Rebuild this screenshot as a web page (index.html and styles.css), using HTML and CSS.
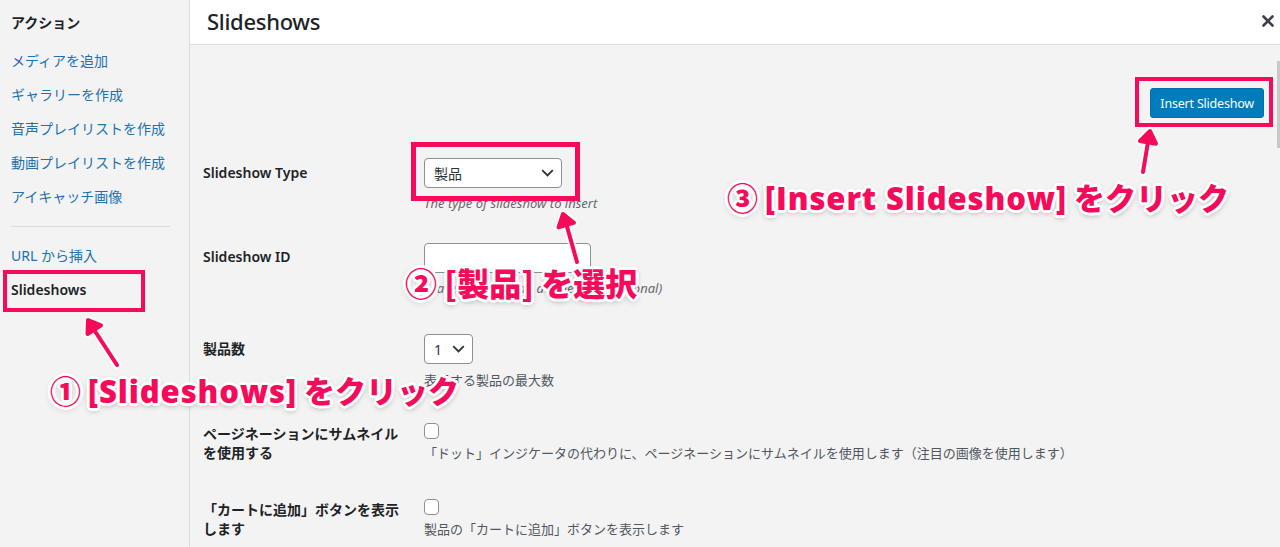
FILE: index.html
```html
<!DOCTYPE html>
<html lang="ja">
<head>
<meta charset="utf-8">
<title>Slideshows</title>
<link rel="stylesheet" href="styles.css">
</head>
<body>
<div class="modal">
  <aside class="sidebar">
    <div class="menu-heading">アクション</div>
    <a class="menu-item">メディアを追加</a>
    <a class="menu-item">ギャラリーを作成</a>
    <a class="menu-item">音声プレイリストを作成</a>
    <a class="menu-item">動画プレイリストを作成</a>
    <a class="menu-item">アイキャッチ画像</a>
    <div class="menu-sep"></div>
    <a class="menu-item">URL から挿入</a>
    <a class="menu-item active">Slideshows</a>
  </aside>

  <main class="frame">
    <header class="frame-title">
      <h1>Slideshows</h1>
      <span class="close">
        <svg width="12" height="12" viewBox="0 0 12 12"><path d="M1.5 1.5L10.5 10.5M10.5 1.5L1.5 10.5" stroke="#3c434a" stroke-width="2.6" stroke-linecap="round" fill="none"/></svg>
      </span>
    </header>
    <div class="content">
      <div class="actions">
        <span class="btn-primary">Insert Slideshow</span>
      </div>
      <div class="form">
        <div class="row">
          <div class="row-label">Slideshow Type</div>
          <div class="row-field">
            <div class="select select-wide"><span>製品</span>
              <svg width="13" height="8" viewBox="0 0 13 8"><path d="M1.2 1.2L6.5 6.4L11.8 1.2" stroke="#2c3338" stroke-width="1.8" fill="none"/></svg>
            </div>
            <p class="desc desc-italic">The type of slideshow to insert</p>
          </div>
        </div>
        <div class="row row-id">
          <div class="row-label">Slideshow ID</div>
          <div class="row-field">
            <div class="text-input"></div>
            <p class="desc desc-italic">Leave blank to add a slideshow (optional)</p>
          </div>
        </div>
        <div class="row row-count">
          <div class="row-label">製品数</div>
          <div class="row-field">
            <div class="select select-small"><span>1</span>
              <svg width="13" height="8" viewBox="0 0 13 8"><path d="M1.2 1.2L6.5 6.4L11.8 1.2" stroke="#2c3338" stroke-width="1.8" fill="none"/></svg>
            </div>
            <p class="desc">表示する製品の最大数</p>
          </div>
        </div>
        <div class="row row-check">
          <div class="row-label">ページネーションにサムネイルを使用する</div>
          <div class="row-field">
            <span class="checkbox"></span>
            <p class="desc">「ドット」インジケータの代わりに、ページネーションにサムネイルを使用します（注目の画像を使用します）</p>
          </div>
        </div>
        <div class="row row-check">
          <div class="row-label">「カートに追加」ボタンを表示します</div>
          <div class="row-field">
            <span class="checkbox"></span>
            <p class="desc">製品の「カートに追加」ボタンを表示します</p>
          </div>
        </div>
      </div>
      <div class="scrollbar"></div>
    </div>
  </main>

  <div class="annotations">
    <svg class="marks" width="1280" height="547" viewBox="0 0 1280 547">
      <g fill="none" stroke="#f70a5a" stroke-width="4">
        <rect x="5" y="272" width="138" height="38"/>
        <rect x="413.5" y="144.5" width="164" height="54" stroke-width="5"/>
        <rect x="1137" y="79" width="134" height="46"/>
      </g>
      <g fill="none" stroke="#ffffff" stroke-width="8" stroke-linecap="round" stroke-linejoin="round" opacity="0.7">
        <path d="M117 365L89 322M87.5 334L88 320L101 325.3"/>
        <path d="M577 262L564 216M558.5 227.3L563 214L574 222.7"/>
        <path d="M1143 172L1149.5 133M1140 141L1150 131L1156 143.7"/>
      </g>
      <g fill="#f70a5a" stroke="#f70a5a" stroke-width="4" stroke-linecap="round" stroke-linejoin="round">
        <path d="M117 365L89 322" fill="none"/>
        <path d="M87.5 334L88 320L101 325.3Z"/>
        <path d="M577 262L564 216" fill="none"/>
        <path d="M558.5 227.3L563 214L574 222.7Z"/>
        <path d="M1143 172L1149.5 133" fill="none"/>
        <path d="M1140 141L1150 131L1156 143.7Z"/>
      </g>
    </svg>
    <div class="note note-1"><span class="num">①</span> <span class="latin">[Slideshows]</span> をクリック</div>
    <div class="note note-2"><span class="num">②</span> [製品] を選択</div>
    <div class="note note-3"><span class="num">③</span> <span class="latin">[Insert Slideshow]</span> をクリック</div>
  </div>
</div>
</body>
</html>
```

FILE: styles.css
```css
* { box-sizing: border-box; }

html, body {
  margin: 0;
  padding: 0;
  width: 1280px;
  height: 547px;
  overflow: hidden;
  background: #f3f3f3;
  font-family: "Noto Sans", "Noto Sans CJK JP", sans-serif;
  color: #1d2327;
}

.modal {
  position: relative;
  display: flex;
  width: 1280px;
  height: 547px;
}

/* Sidebar */
.sidebar {
  width: 190px;
  flex: 0 0 190px;
  background: #f3f3f3;
  border-right: 1px solid #dcdcde;
  padding: 10px 20px 0 11px;
}

.menu-heading {
  font-size: 14px;
  line-height: 24px;
  margin-bottom: 10px;
  font-weight: 600;
  color: #1d2327;
  font-family: "Noto Sans CJK JP", sans-serif;
}

.menu-item {
  display: block;
  font-size: 14px;
  line-height: 34px;
  height: 34px;
  color: #2271b1;
  font-family: "Noto Sans", "Noto Sans CJK JP", sans-serif;
  white-space: nowrap;
}

.menu-item.active {
  color: #1d2327;
  font-weight: 600;
}

.menu-sep {
  height: 1px;
  background: #dcdcde;
  margin: 12px 0 12px 0;
  width: 159px;
}

/* Frame */
.frame {
  flex: 1;
  display: flex;
  flex-direction: column;
  min-width: 0;
}

.frame-title {
  height: 45px;
  flex: 0 0 45px;
  background: #ffffff;
  border-bottom: 1px solid #dcdcde;
  display: flex;
  align-items: center;
  justify-content: space-between;
  padding: 0 6px 3px 17px;
}

.frame-title h1 {
  margin: 0;
  font-size: 22px;
  font-weight: 500;
  line-height: 1;
  color: #1d2327;
  letter-spacing: -0.3px;
}

.close {
  display: flex;
  width: 12px;
  height: 12px;
}

.content {
  position: relative;
  flex: 1;
  background: #f3f3f3;
}

.actions {
  display: flex;
  justify-content: flex-end;
  padding: 43px 16px 0 0;
}

.btn-primary {
  display: inline-flex;
  align-items: center;
  height: 30px;
  padding: 0 9px;
  background: #007cba;
  border: 1px solid #0071a8;
  border-radius: 3px;
  color: #ffffff;
  font-size: 12.5px;
  letter-spacing: -0.2px;
}

.form {
  margin-top: 25px;
  padding-left: 13px;
}

.row {
  display: grid;
  grid-template-columns: 221px 1fr;
  padding: 15px 0 15px;
}

.row-id { padding: 16px 0 22px; }
.row-check { padding: 15px 0 18px; }

.row-label {
  width: 200px;
  padding-top: 5px;
  font-size: 14px;
  line-height: 19px;
  font-weight: 600;
  color: #1d2327;
  font-family: "Noto Sans", "Noto Sans CJK JP", sans-serif;
}

.row-id .row-label { padding-top: 4px; }

.row-field {
  display: flex;
  flex-direction: column;
  align-items: flex-start;
}

.select {
  height: 30px;
  background: #ffffff;
  border: 1px solid #8c8f94;
  border-radius: 4px;
  display: flex;
  align-items: center;
  justify-content: space-between;
  padding: 0 7px 0 9px;
  font-size: 14px;
  color: #2c3338;
  font-family: "Noto Sans", "Noto Sans CJK JP", sans-serif;
}

.select-wide { width: 138px; }
.select-small { width: 49px; }

.text-input {
  width: 167px;
  height: 30px;
  background: #ffffff;
  border: 1px solid #8c8f94;
  border-radius: 4px;
}

.desc {
  margin: 6px 0 0;
  font-size: 13px;
  line-height: 18px;
  color: #50575e;
  font-family: "Noto Sans CJK JP", sans-serif;
  white-space: nowrap;
}

.desc-italic {
  font-style: italic;
  color: #646970;
  font-family: "Noto Sans", sans-serif;
}

.row-count .desc { margin-top: 7px; }
.row-check .desc { margin-top: 5px; }

.checkbox {
  display: block;
  width: 15px;
  height: 16px;
  margin-top: 4px;
  background: #ffffff;
  border: 1px solid #8c8f94;
  border-radius: 4px;
}

.scrollbar {
  position: absolute;
  right: 0;
  top: 16px;
  width: 3px;
  height: 87px;
  background: #c8c8c8;
}

/* Annotations overlay */
.annotations {
  position: absolute;
  left: 0;
  top: 0;
  width: 1280px;
  height: 547px;
  pointer-events: none;
}

.marks {
  position: absolute;
  left: 0;
  top: 0;
}

.note {
  position: absolute;
  white-space: nowrap;
  color: #f70a5a;
  font-family: "Noto Sans CJK JP", sans-serif;
  font-weight: 900;
  font-size: 31px;
  line-height: 40px;
  text-shadow:
    3px 0 0 #fff, -3px 0 0 #fff, 0 3px 0 #fff, 0 -3px 0 #fff,
    2px 2px 0 #fff, -2px 2px 0 #fff, 2px -2px 0 #fff, -2px -2px 0 #fff,
    0 2px 6px rgba(0, 0, 0, 0.45);
}

.note .latin {
  font-family: "Open Sans", "Noto Sans", sans-serif;
  font-weight: 800;
  letter-spacing: 0.9px;
}

.note-1 { left: 50px; top: 370px; }
.note-2 { left: 405px; top: 262px; font-size: 32px; }
.note-3 { left: 727px; top: 177px; }
```
